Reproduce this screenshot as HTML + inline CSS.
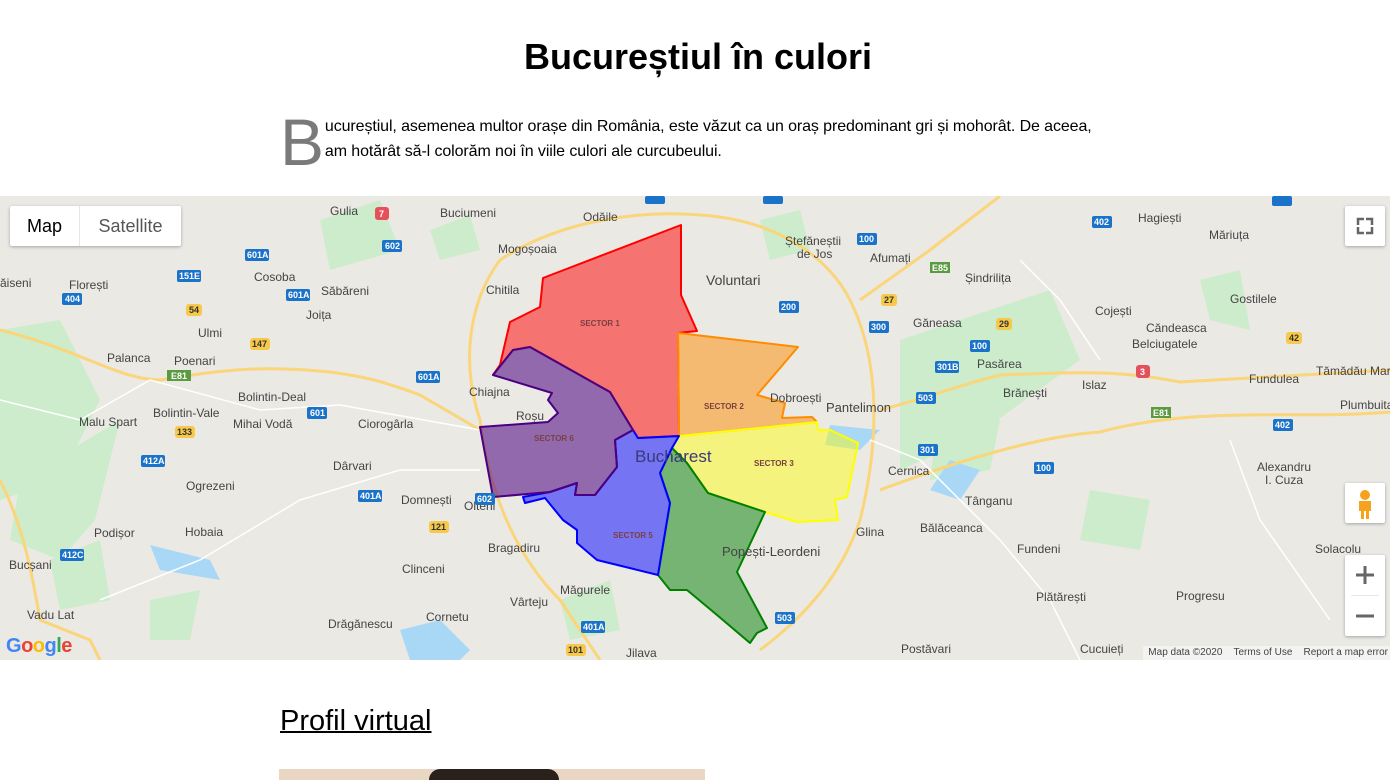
<!DOCTYPE html>
<html><head><meta charset="utf-8"><style>
body{margin:0;background:#fff;font-family:"Liberation Sans",Arial,sans-serif;width:1390px;height:780px;overflow:hidden;position:relative}
h1{position:absolute;top:36px;left:0;width:1396px;text-align:center;margin:0;font-size:36px;font-weight:bold;color:#000}
.intro{position:absolute;left:280px;top:114px;width:828px;font-size:16px;line-height:25px;color:#000;letter-spacing:-0.1px}
.drop{float:left;font-size:66px;line-height:48px;color:#7a7a7a;margin:0 1px 0 0;padding-top:4px;height:50px}
#map{position:absolute;left:0;top:196px;width:1390px;height:464px;background:#ebe9e4;overflow:hidden}
.btn{position:absolute;background:#fff;box-shadow:0 1px 3px rgba(0,0,0,.3)}
h2{position:absolute;left:280px;top:705px;margin:0;font-size:29px;font-weight:normal;text-decoration:underline;text-decoration-thickness:2px}
.photo{position:absolute;left:279px;top:769px;width:426px;height:11px;background:#e9d7c4}
svg text{font-family:"Liberation Sans",Arial,sans-serif}
</style></head><body>
<h1>Bucureștiul în culori</h1>
<div class="intro"><span class="drop">B</span>ucureștiul, asemenea multor orașe din România, este văzut ca un oraș predominant gri și mohorât. De aceea, am hotărât să-l colorăm noi în viile culori ale curcubeului.</div>
<div id="map">
<svg width="1390" height="464" viewBox="0 196 1390 464" xmlns="http://www.w3.org/2000/svg">
<g fill="#cdeccc">
<path d="M0,330 L60,320 L100,400 L60,480 L0,500Z"/>
<path d="M20,480 L120,420 L95,520 L60,560 L10,540Z"/>
<path d="M320,220 L380,200 L400,250 L330,270Z"/>
<path d="M900,340 L1050,290 L1080,360 L970,440 L900,470Z"/>
<path d="M940,400 L1000,420 L990,470 L930,480Z"/>
<path d="M1200,280 L1240,270 L1250,330 L1210,320Z"/>
<path d="M50,560 L100,540 L110,600 L60,610Z"/>
<path d="M150,600 L200,590 L190,640 L150,640Z"/>
<path d="M560,600 L610,580 L620,630 L570,640Z"/>
<path d="M430,230 L470,215 L480,250 L440,260Z"/>
<path d="M760,220 L800,210 L810,250 L770,260Z"/>
<path d="M1090,490 L1150,500 L1140,550 L1080,540Z"/>
</g>
<g fill="#a9d8f7">
<path d="M400,630 L440,620 L470,650 L460,660 L410,660Z"/>
<path d="M150,545 L210,560 L220,580 L160,570Z"/>
<path d="M830,425 L880,430 L860,450 L825,445Z"/>
<path d="M950,460 L980,470 L960,500 L930,490Z"/>
</g>
<g fill="none" stroke="#fad57a" stroke-width="3">
<path d="M0,330 C80,350 120,380 160,380 C220,370 260,365 330,372 C360,376 380,380 420,395 L480,430"/>
<path d="M880,410 C920,400 960,385 1000,375 C1080,372 1120,370 1180,382 L1390,370"/>
<path d="M880,490 C960,460 1040,436 1100,432 C1200,405 1300,420 1390,412"/>
<path d="M0,480 C20,520 30,560 40,620 L90,640 L100,660"/>
<path d="M500,260 C560,220 640,210 700,215 C780,220 830,260 850,300 C880,360 880,440 860,520 C840,580 800,620 760,650"/>
<path d="M500,260 C470,300 460,360 480,420 C490,500 520,560 560,600 L600,660"/>
<path d="M1000,196 L930,250 L860,300"/>
</g>
<g fill="none" stroke="#fff" stroke-width="1.5">
<path d="M0,400 L80,420 L150,380 L260,410 L340,405 L480,430"/>
<path d="M100,600 L200,560 L300,500 L400,470 L480,470"/>
<path d="M870,440 L920,460 L1000,540 L1050,600 L1080,660"/>
<path d="M1230,440 L1260,520 L1330,620"/>
<path d="M1020,260 L1060,300 L1100,360"/>
</g>
<g stroke-width="2" stroke-linejoin="round">
<polygon fill="rgba(255,0,0,.5)" stroke="#f00" points="681,225 681,295 697,331 678,333 679,436 638,438 633,430 610,392 530,347 513,350 493,375 500,365 510,322 540,307 543,278"/>
<polygon fill="rgba(255,140,0,.5)" stroke="#ff8c00" points="678,333 798,347 757,395 785,403 782,418 812,417 817,422 679,436"/>
<polygon fill="rgba(255,255,0,.45)" stroke="#ff0" points="679,436 817,422 818,430 830,430 858,443 847,497 835,500 838,520 797,522 765,512 708,493 687,463 672,448"/>
<polygon fill="rgba(0,128,0,.5)" stroke="#008000" points="672,448 687,463 708,493 765,512 737,572 767,628 757,633 750,643 717,615 687,590 670,590 658,575 670,503 660,473"/>
<polygon fill="rgba(0,0,255,.5)" stroke="#00f" points="679,436 672,448 660,473 670,503 658,575 597,560 577,543 577,530 563,520 545,498 525,503 523,497 550,492 577,483 575,495 595,495 617,467 615,440 633,430 638,438"/>
<polygon fill="rgba(75,0,130,.55)" stroke="#4b0082" points="633,430 615,440 617,467 595,495 575,495 577,483 550,492 493,497 480,427 548,422 558,413 548,400 552,393 493,375 513,350 530,347 610,392"/>
</g>
<g font-size="12" fill="#444">
<text x="330" y="215">Gulia</text><text x="440" y="217">Buciumeni</text><text x="583" y="221">Odăile</text>
<text x="498" y="253">Mogoșoaia</text><text x="486" y="294">Chitila</text><text x="469" y="396">Chiajna</text>
<text x="516" y="420">Roșu</text><text x="464" y="510">Olteni</text><text x="488" y="552">Bragadiru</text>
<text x="560" y="594">Măgurele</text><text x="510" y="606">Vârteju</text><text x="626" y="657">Jilava</text>
<text x="706" y="285" font-size="14">Voluntari</text><text x="785" y="245">Ștefăneștii</text><text x="797" y="258">de Jos</text>
<text x="870" y="262">Afumați</text><text x="826" y="412" font-size="13">Pantelimon</text><text x="770" y="402">Dobroești</text>
<text x="722" y="556" font-size="13">Popești-Leordeni</text><text x="856" y="536">Glina</text><text x="888" y="475">Cernica</text>
<text x="965" y="505">Tânganu</text><text x="920" y="532">Bălăceanca</text><text x="1017" y="553">Fundeni</text>
<text x="901" y="653">Postăvari</text><text x="1080" y="653">Cucuieți</text><text x="1036" y="601">Plătărești</text>
<text x="1176" y="600">Progresu</text><text x="1315" y="553">Solacolu</text><text x="1257" y="471">Alexandru</text><text x="1265" y="484">I. Cuza</text>
<text x="1249" y="383">Fundulea</text><text x="1082" y="389">Islaz</text><text x="1003" y="397">Brănești</text>
<text x="977" y="368">Pasărea</text><text x="913" y="327">Găneasa</text><text x="1095" y="315">Cojești</text>
<text x="1146" y="332">Căndeasca</text><text x="1132" y="348">Belciugatele</text><text x="1230" y="303">Gostilele</text>
<text x="1138" y="222">Hagiești</text><text x="1209" y="239">Măriuța</text><text x="965" y="282">Șindrilița</text>
<text x="1316" y="375">Tămădău Mare</text><text x="1340" y="409">Plumbuita</text>
<text x="254" y="281">Cosoba</text><text x="321" y="295">Săbăreni</text><text x="306" y="319">Joița</text>
<text x="69" y="289">Florești</text><text x="198" y="337">Ulmi</text><text x="107" y="362">Palanca</text><text x="174" y="365">Poenari</text>
<text x="238" y="401">Bolintin-Deal</text><text x="153" y="417">Bolintin-Vale</text><text x="79" y="426">Malu Spart</text>
<text x="233" y="428">Mihai Vodă</text><text x="358" y="428">Ciorogârla</text><text x="333" y="470">Dârvari</text>
<text x="186" y="490">Ogrezeni</text><text x="401" y="504">Domnești</text><text x="94" y="537">Podișor</text>
<text x="185" y="536">Hobaia</text><text x="402" y="573">Clinceni</text><text x="9" y="569">Bucșani</text>
<text x="27" y="619">Vadu Lat</text><text x="328" y="628">Drăgănescu</text><text x="426" y="621">Cornetu</text>
<text x="0" y="287">ăiseni</text>
<text x="635" y="462" font-size="17" fill="#3a3a7a">Bucharest</text>
<g font-size="8" font-weight="bold" fill="#7a4040"><text x="580" y="326">SECTOR 1</text><text x="704" y="409">SECTOR 2</text><text x="754" y="466">SECTOR 3</text><text x="613" y="538">SECTOR 5</text><text x="534" y="441">SECTOR 6</text></g>
</g>
<g font-size="9" font-weight="bold" fill="#fff">
<rect x="245" y="249" width="24" height="12" rx="2" fill="#1a73c8"/><text x="247" y="258">601A</text>
<rect x="286" y="289" width="24" height="12" rx="2" fill="#1a73c8"/><text x="288" y="298">601A</text>
<rect x="177" y="270" width="24" height="12" rx="2" fill="#1a73c8"/><text x="179" y="279">151E</text>
<rect x="62" y="293" width="20" height="12" rx="2" fill="#1a73c8"/><text x="65" y="302">404</text>
<rect x="141" y="455" width="24" height="12" rx="2" fill="#1a73c8"/><text x="143" y="464">412A</text>
<rect x="60" y="549" width="24" height="12" rx="2" fill="#1a73c8"/><text x="62" y="558">412C</text>
<rect x="358" y="490" width="24" height="12" rx="2" fill="#1a73c8"/><text x="360" y="499">401A</text>
<rect x="581" y="621" width="24" height="12" rx="2" fill="#1a73c8"/><text x="583" y="630">401A</text>
<rect x="416" y="371" width="24" height="12" rx="2" fill="#1a73c8"/><text x="418" y="380">601A</text>
<rect x="307" y="407" width="20" height="12" rx="2" fill="#1a73c8"/><text x="310" y="416">601</text>
<rect x="382" y="240" width="20" height="12" rx="2" fill="#1a73c8"/><text x="385" y="249">602</text>
<rect x="475" y="493" width="20" height="12" rx="2" fill="#1a73c8"/><text x="477" y="502">602</text>
<rect x="779" y="301" width="20" height="12" rx="2" fill="#1a73c8"/><text x="781" y="310">200</text>
<rect x="857" y="233" width="20" height="12" rx="2" fill="#1a73c8"/><text x="859" y="242">100</text>
<rect x="869" y="321" width="20" height="12" rx="2" fill="#1a73c8"/><text x="871" y="330">300</text>
<rect x="970" y="340" width="20" height="12" rx="2" fill="#1a73c8"/><text x="972" y="349">100</text>
<rect x="935" y="361" width="24" height="12" rx="2" fill="#1a73c8"/><text x="937" y="370">301B</text>
<rect x="916" y="392" width="20" height="12" rx="2" fill="#1a73c8"/><text x="918" y="401">503</text>
<rect x="918" y="444" width="20" height="12" rx="2" fill="#1a73c8"/><text x="920" y="453">301</text>
<rect x="1034" y="462" width="20" height="12" rx="2" fill="#1a73c8"/><text x="1036" y="471">100</text>
<rect x="1092" y="216" width="20" height="12" rx="2" fill="#1a73c8"/><text x="1094" y="225">402</text>
<rect x="1273" y="419" width="20" height="12" rx="2" fill="#1a73c8"/><text x="1275" y="428">402</text>
<rect x="1272" y="196" width="20" height="10" rx="2" fill="#1a73c8"/>
<rect x="775" y="612" width="20" height="12" rx="2" fill="#1a73c8"/><text x="777" y="621">503</text>
<rect x="763" y="196" width="20" height="8" rx="2" fill="#1a73c8"/>
<rect x="645" y="196" width="20" height="8" rx="2" fill="#1a73c8"/>
<rect x="167" y="370" width="24" height="11" fill="#5a9a40"/><text x="171" y="379">E81</text>
<rect x="1151" y="407" width="20" height="11" fill="#5a9a40"/><text x="1153" y="416">E81</text>
<rect x="930" y="262" width="20" height="11" fill="#5a9a40"/><text x="932" y="271">E85</text>
<g fill="#333"><rect x="186" y="304" width="16" height="12" rx="3" fill="#f6c94a"/><text x="189" y="313">54</text>
<rect x="250" y="338" width="20" height="12" rx="3" fill="#f6c94a"/><text x="252" y="347">147</text>
<rect x="175" y="426" width="20" height="12" rx="3" fill="#f6c94a"/><text x="177" y="435">133</text>
<rect x="429" y="521" width="20" height="12" rx="3" fill="#f6c94a"/><text x="431" y="530">121</text>
<rect x="566" y="644" width="20" height="12" rx="3" fill="#f6c94a"/><text x="568" y="653">101</text>
<rect x="881" y="294" width="16" height="12" rx="3" fill="#f6c94a"/><text x="884" y="303">27</text>
<rect x="996" y="318" width="16" height="12" rx="3" fill="#f6c94a"/><text x="999" y="327">29</text>
<rect x="1286" y="332" width="16" height="12" rx="3" fill="#f6c94a"/><text x="1289" y="341">42</text></g>
<rect x="375" y="207" width="14" height="13" rx="3" fill="#e5505a"/><text x="379" y="217">7</text>
<rect x="1136" y="365" width="14" height="13" rx="3" fill="#e5505a"/><text x="1140" y="375">3</text>
</g>
</svg>
<div class="btn" style="left:10px;top:10px;width:171px;height:40px;border-radius:2px">
<div style="position:absolute;left:0;top:0;width:69px;height:40px;line-height:40px;text-align:center;font-size:18px;color:#000;font-weight:500;border-right:1px solid #e6e6e6">Map</div>
<div style="position:absolute;left:70px;top:0;width:101px;height:40px;line-height:40px;text-align:center;font-size:18px;color:#565656">Satellite</div></div>
<div class="btn" style="left:1345px;top:10px;width:40px;height:40px;border-radius:2px">
<svg width="40" height="40"><path d="M13,19V13h6M21,13h6v6M27,21v6h-6M19,27h-6v-6" fill="none" stroke="#666" stroke-width="2.5"/></svg></div>
<div class="btn" style="left:1345px;top:287px;width:40px;height:40px;border-radius:2px">
<svg width="40" height="40"><circle cx="20" cy="12" r="5" fill="#f7a21c"/><path d="M14,18h12v10h-2v8h-3v-8h-2v8h-3v-8h-2z" fill="#f7a21c"/></svg></div>
<div class="btn" style="left:1345px;top:359px;width:40px;height:81px;border-radius:2px">
<svg width="40" height="81"><path d="M11,20h18M20,11v18M11,61h18" stroke="#666" stroke-width="3"/><path d="M6,40.5h28" stroke="#e6e6e6"/></svg></div>
<div style="position:absolute;left:6px;top:439px;font-size:20px;font-weight:bold;letter-spacing:-0.5px"><span style="color:#4285f4">G</span><span style="color:#ea4335">o</span><span style="color:#fbbc05">o</span><span style="color:#4285f4">g</span><span style="color:#34a853">l</span><span style="color:#ea4335">e</span></div>
<div style="position:absolute;right:0;top:450px;height:14px;background:rgba(245,245,245,.8);font-size:10px;color:#444;line-height:14px;padding:0 2px 0 5px;white-space:nowrap">Map data ©2020 &nbsp; &nbsp;Terms of Use &nbsp; &nbsp;Report a map error</div>
</div>
<h2>Profil virtual</h2>
<div class="photo"><div style="position:absolute;left:150px;top:0;width:130px;height:11px;background:#2a201c;border-radius:60px 60px 0 0"></div></div>
</body></html>
